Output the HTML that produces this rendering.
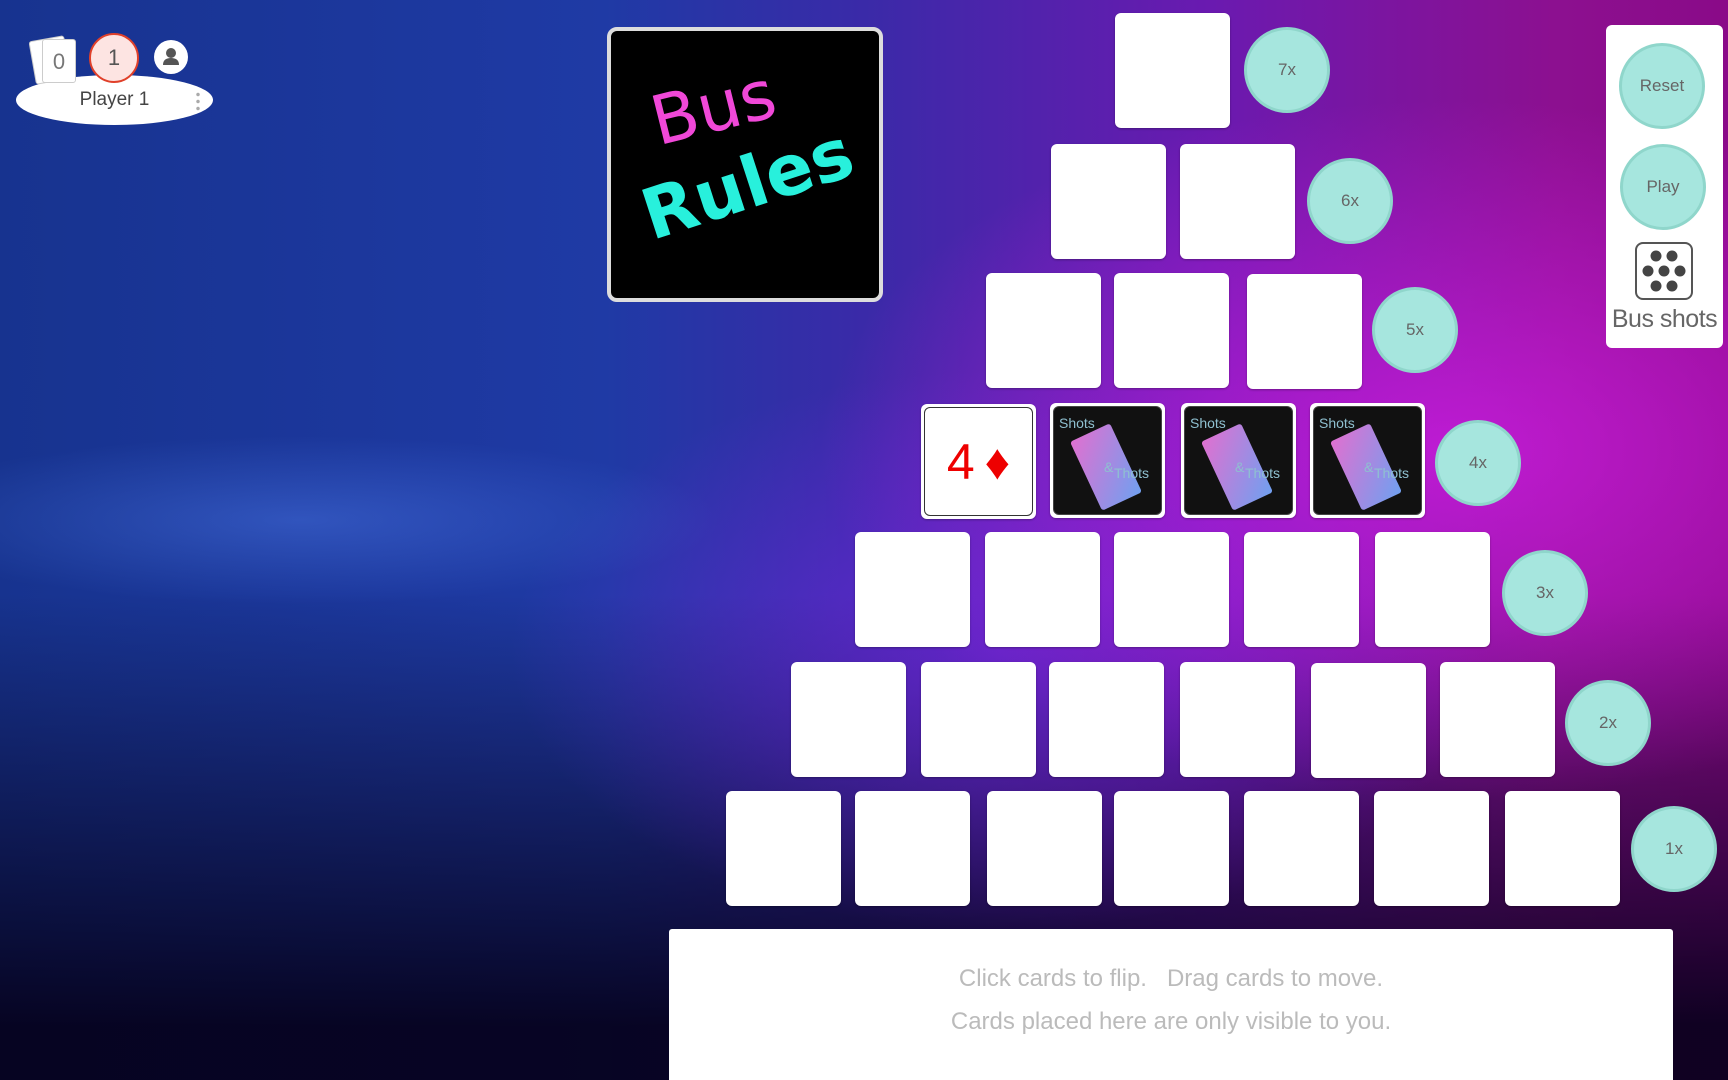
<!DOCTYPE html>
<html><head><meta charset="utf-8"><style>
*{margin:0;padding:0;box-sizing:border-box}
body{width:1728px;height:1080px;overflow:hidden;position:relative;font-family:"Liberation Sans",sans-serif;
background:
radial-gradient(ellipse 600px 120px at 300px 520px, rgba(90,140,255,0.35), transparent 70%),
radial-gradient(ellipse 900px 500px at 1450px 450px, rgba(210,30,230,0.75), transparent 70%),
radial-gradient(ellipse 700px 400px at 1000px 650px, rgba(120,40,230,0.6), transparent 70%),
linear-gradient(180deg, rgba(0,0,0,0) 55%, rgba(5,0,25,0.92) 95%),
linear-gradient(90deg,#17338f 0%,#1f3aa5 35%,#3a2aa8 50%,#6a1ab0 70%,#8c1090 90%,#8a0a88 100%);}
.a{position:absolute}
.card{position:absolute;width:115px;height:115px;background:#fff;border-radius:6px;box-shadow:0 1px 2px rgba(0,0,0,.3)}
.circ{position:absolute;width:86px;height:86px;border-radius:50%;background:#a6e6de;border:3px solid #8fd6cb;color:#666;font-size:17px;display:flex;align-items:center;justify-content:center}
.back{background:#fff;padding:3px}
.back .in{width:100%;height:100%;background:#111;border-radius:6px;border:1px solid #444;position:relative;overflow:hidden}
.back .rect{position:absolute;left:30px;top:22px;width:44px;height:76px;transform:rotate(-25deg);background:linear-gradient(135deg,#e070d0,#70a0f0);border-radius:3px}
.back .t{position:absolute;color:#8fc0d0;font-size:14px}
</style></head><body>

<!-- player widget -->
<div class="a" style="left:16px;top:75px;width:197px;height:50px;background:#fff;border-radius:50%/50%"></div>
<div class="a" style="left:32px;top:38px;width:36px;height:44px;background:#fff;border:1px solid #ccc;transform:rotate(-10deg);border-radius:3px"></div>
<div class="a" style="left:42px;top:39px;width:34px;height:44px;background:#fff;border:1px solid #ccc;border-radius:3px;color:#777;font-size:22px;text-align:center;line-height:44px">0</div>
<div class="a" style="left:89px;top:33px;width:50px;height:50px;border-radius:50%;background:#fde4e2;border:2px solid #e0402a;color:#555;font-size:22px;text-align:center;line-height:46px">1</div>
<div class="a" style="left:154px;top:40px;width:34px;height:34px;border-radius:50%;background:#fff">
<svg width="34" height="34" viewBox="0 0 34 34"><circle cx="17" cy="13" r="5" fill="#555"/><path d="M9 25 Q9 18 17 18 Q25 18 25 25 Z" fill="#555"/></svg></div>
<div class="a" style="left:16px;top:89px;width:197px;text-align:center;font-size:19px;color:#444">Player 1</div>
<div class="a" style="left:196px;top:91px;width:4px;height:20px;background:radial-gradient(circle,#aaa 1.5px,transparent 2px) 0 0/4px 7px"></div>

<!-- Bus Rules card -->
<div class="a" style="left:607px;top:27px;width:276px;height:275px;background:#000;border:4px solid #ddd;border-radius:10px;overflow:hidden">
<div class="a" style="left:40px;top:38px;font-family:'DejaVu Sans',sans-serif;font-size:68px;color:#f048d8;transform:rotate(-14deg)">Bus</div>
<div class="a" style="left:28px;top:112px;font-family:'DejaVu Sans',sans-serif;font-weight:bold;font-size:70px;color:#28f0dc;transform:rotate(-18deg)">Rules</div>
</div>

<!-- row 7 -->
<div class="card" style="left:1115px;top:13px"></div>
<!-- row 6 -->
<div class="card" style="left:1051px;top:144px"></div><div class="card" style="left:1180px;top:144px"></div>
<!-- row 5 -->
<div class="card" style="left:986px;top:273px"></div><div class="card" style="left:1114px;top:273px"></div><div class="card" style="left:1247px;top:274px"></div>
<!-- row 4 -->
<div class="card" style="left:921px;top:404px;padding:3px"><div style="width:100%;height:100%;border:1px solid #333;border-radius:6px;color:#e00;font-size:50px;display:flex;align-items:center;justify-content:center;gap:10px"><span>4</span><span>♦</span></div></div>
<div class="card back" style="left:1050px;top:403px"><div class="in"><div class="rect"></div><div class="t" style="left:5px;top:8px">Shots</div><div class="t" style="left:50px;top:52px">&amp;</div><div class="t" style="left:60px;top:58px">Thots</div></div></div>
<div class="card back" style="left:1181px;top:403px"><div class="in"><div class="rect"></div><div class="t" style="left:5px;top:8px">Shots</div><div class="t" style="left:50px;top:52px">&amp;</div><div class="t" style="left:60px;top:58px">Thots</div></div></div>
<div class="card back" style="left:1310px;top:403px"><div class="in"><div class="rect"></div><div class="t" style="left:5px;top:8px">Shots</div><div class="t" style="left:50px;top:52px">&amp;</div><div class="t" style="left:60px;top:58px">Thots</div></div></div>
<!-- row 3 -->
<div class="card" style="left:855px;top:532px"></div><div class="card" style="left:985px;top:532px"></div><div class="card" style="left:1114px;top:532px"></div><div class="card" style="left:1244px;top:532px"></div><div class="card" style="left:1375px;top:532px"></div>
<!-- row 2 -->
<div class="card" style="left:791px;top:662px"></div><div class="card" style="left:921px;top:662px"></div><div class="card" style="left:1049px;top:662px"></div><div class="card" style="left:1180px;top:662px"></div><div class="card" style="left:1311px;top:663px"></div><div class="card" style="left:1440px;top:662px"></div>
<!-- row 1 -->
<div class="card" style="left:726px;top:791px"></div><div class="card" style="left:855px;top:791px"></div><div class="card" style="left:987px;top:791px"></div><div class="card" style="left:1114px;top:791px"></div><div class="card" style="left:1244px;top:791px"></div><div class="card" style="left:1374px;top:791px"></div><div class="card" style="left:1505px;top:791px"></div>

<!-- multipliers -->
<div class="circ" style="left:1244px;top:27px">7x</div>
<div class="circ" style="left:1307px;top:158px">6x</div>
<div class="circ" style="left:1372px;top:287px">5x</div>
<div class="circ" style="left:1435px;top:420px">4x</div>
<div class="circ" style="left:1502px;top:550px">3x</div>
<div class="circ" style="left:1565px;top:680px">2x</div>
<div class="circ" style="left:1631px;top:806px">1x</div>

<!-- right panel -->
<div class="a" style="left:1606px;top:25px;width:117px;height:323px;background:#fff;border-radius:6px"></div>
<div class="circ" style="left:1619px;top:43px">Reset</div>
<div class="circ" style="left:1620px;top:144px">Play</div>
<div class="a" style="left:1635px;top:242px;width:58px;height:58px;border:2px solid #555;border-radius:8px;background:#fff">
<svg width="54" height="54" viewBox="0 0 54 54" fill="#444"><circle cx="19" cy="12" r="5.5"/><circle cx="35" cy="12" r="5.5"/><circle cx="11" cy="27" r="5.5"/><circle cx="27" cy="27" r="5.5"/><circle cx="43" cy="27" r="5.5"/><circle cx="19" cy="42" r="5.5"/><circle cx="35" cy="42" r="5.5"/></svg></div>
<div class="a" style="left:1606px;top:305px;width:117px;text-align:center;font-size:25px;color:#666;letter-spacing:-0.5px">Bus shots</div>

<!-- hand area -->
<div class="a" style="left:669px;top:929px;width:1004px;height:151px;background:#fff;border-radius:3px 3px 0 0;color:#bbb;font-size:24px;text-align:center;padding-top:28px;line-height:43px">Click cards to flip.&nbsp;&nbsp;&nbsp;Drag cards to move.<br>Cards placed here are only visible to you.</div>
</body></html>
